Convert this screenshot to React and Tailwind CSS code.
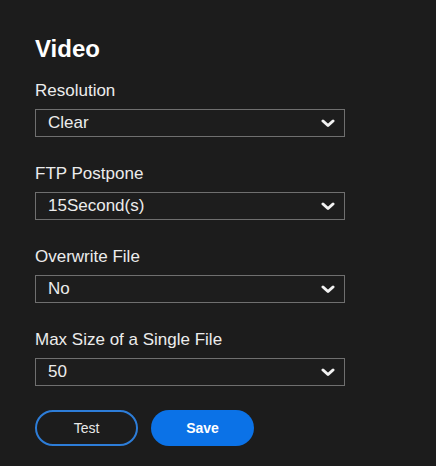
import React from 'react';

const fields = [
    { label: 'Resolution', value: 'Clear' },
    { label: 'FTP Postpone', value: '15Second(s)' },
    { label: 'Overwrite File', value: 'No' },
    { label: 'Max Size of a Single File', value: '50' },
];

const Chevron = () => (
    <svg width="14" height="9" viewBox="0 0 14 9" fill="none">
        <path d="M2 2l5 4.5L12 2" stroke="#f2f2f2" strokeWidth="3" strokeLinecap="round" strokeLinejoin="round" />
    </svg>
);

const SelectBox = ({ value }) => (
    <div className="flex justify-between items-center pl-3 pr-[9px] w-[310px] h-[28px] border border-[#6f6f6f] bg-[#1d1d1d]">
        <span className="text-[17px] leading-[26px] text-[#ececec]">{value}</span>
        <Chevron />
    </div>
);

export default function App() {
    return (
        <div
            className="min-h-screen w-full bg-[#1c1c1c] pl-[35px] pt-[33px]"
            style={{ fontFamily: '"Liberation Sans", Arial, sans-serif' }}
        >
            <h1 className="text-[24px] leading-[32px] font-bold text-white">Video</h1>

            <div className="flex flex-col gap-[27px] mt-4">
                {fields.map((f) => (
                    <div key={f.label} className="flex flex-col gap-2">
                        <label className="text-[17px] leading-[20px] text-[#ececec]">{f.label}</label>
                        <SelectBox value={f.value} />
                    </div>
                ))}
            </div>

            {/* 버튼 */}
            <div className="flex gap-[13px] mt-[24px]">
                <button className="w-[103px] h-[36px] rounded-full border-2 border-[#2d7dd8] text-[14px] text-[#e8e8e8]">
                    Test
                </button>
                <button className="w-[103px] h-[36px] rounded-full bg-[#0b72e7] text-[14px] font-bold text-white">
                    Save
                </button>
            </div>
        </div>
    );
}
